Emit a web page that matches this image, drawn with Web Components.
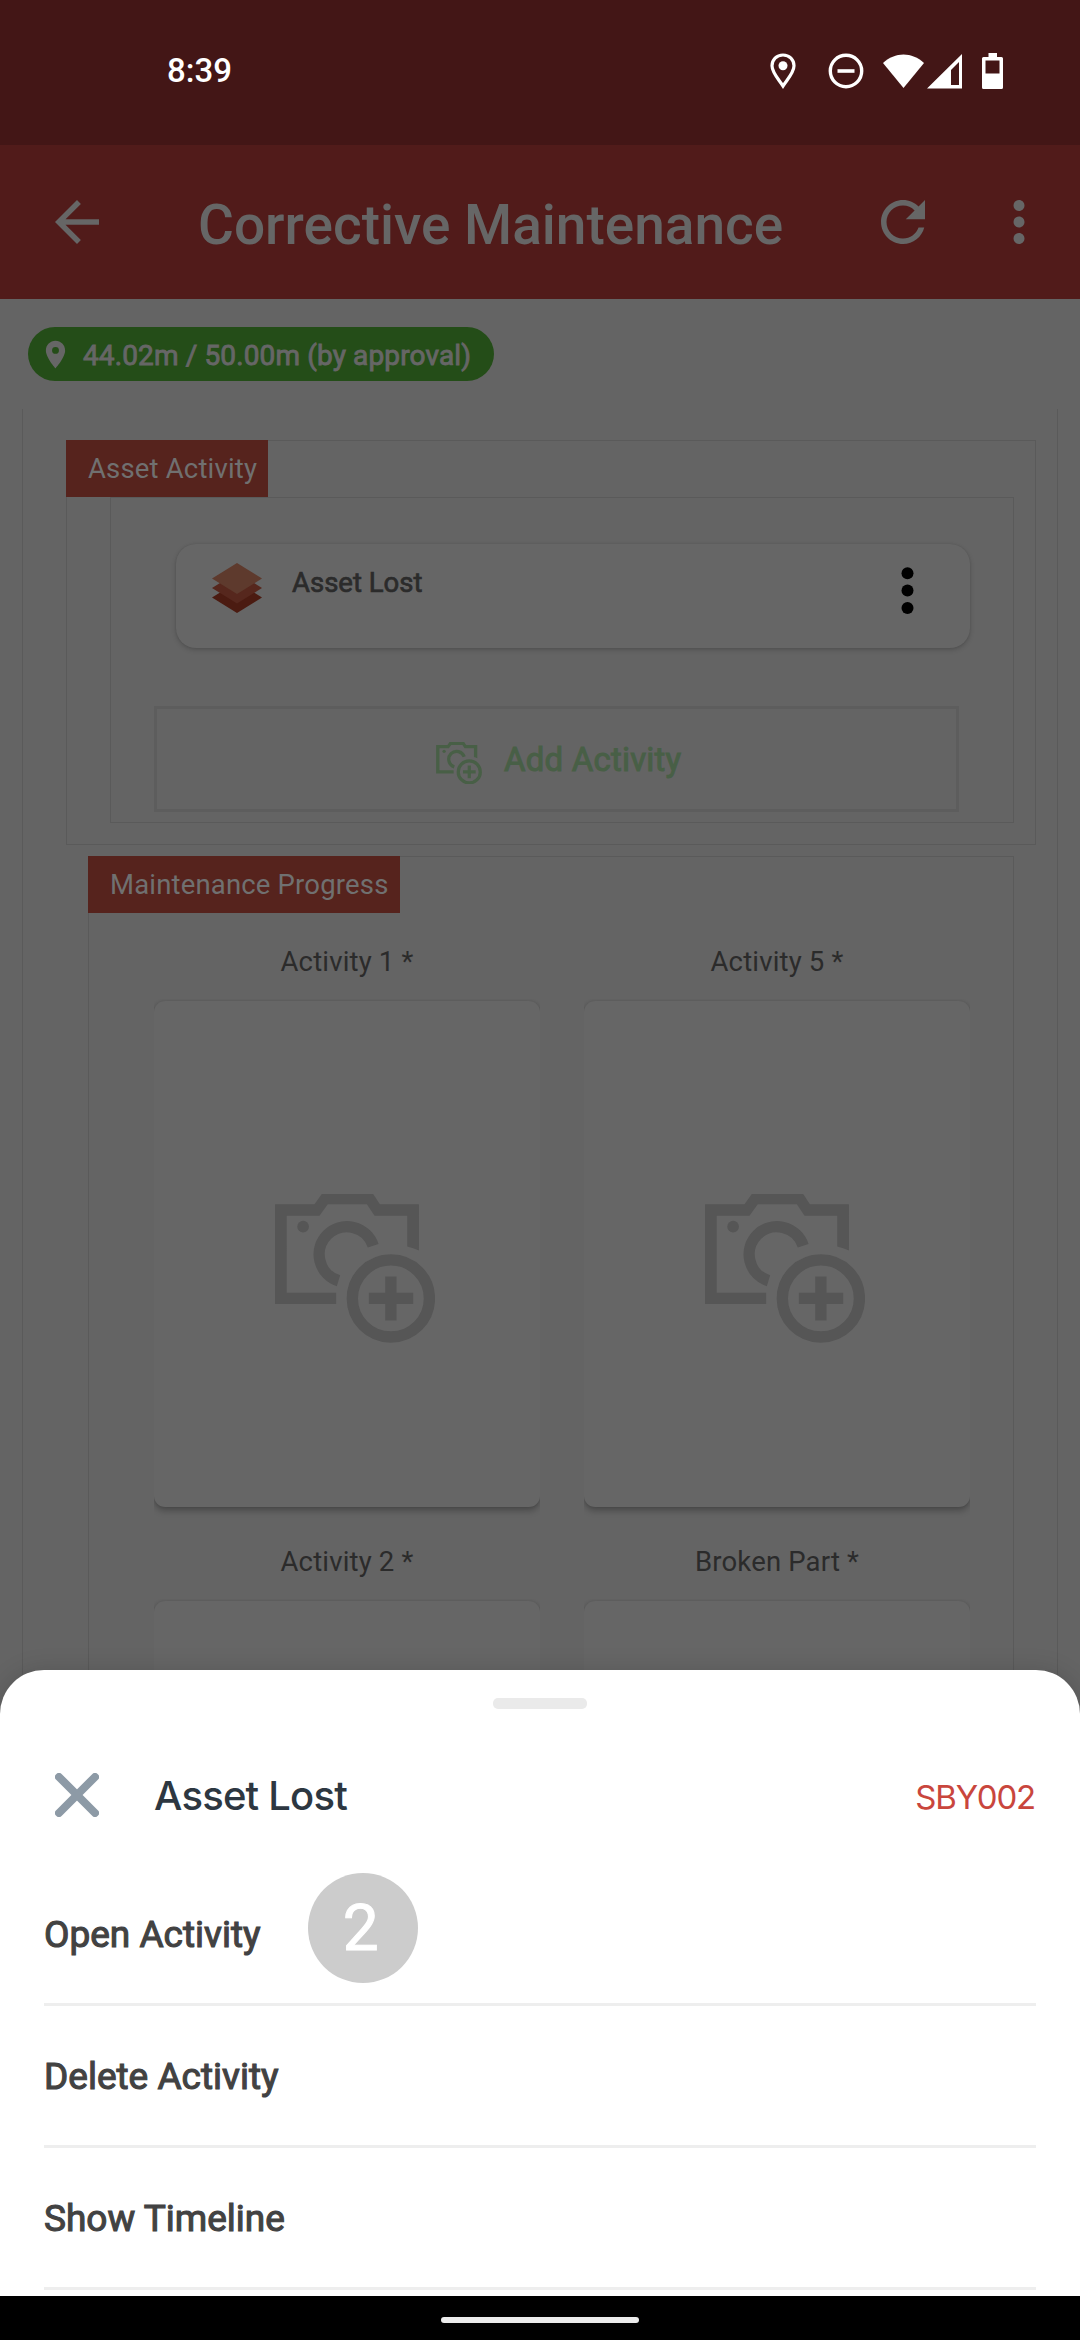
<!DOCTYPE html>
<html lang="en">
<head>
<meta charset="utf-8">
<title>Corrective Maintenance</title>
<style>
  html, body { margin: 0; padding: 0; }
  body { width: 1080px; height: 2340px; overflow: hidden; background: #646464; font-family: Roboto, "Liberation Sans", sans-serif; }
</style>
</head>
<body>
<maintenance-app></maintenance-app>
<script>
const define = (name, html) => {
  const tpl = document.createElement('template');
  tpl.innerHTML = html;
  customElements.define(name, class extends HTMLElement {
    constructor() {
      super();
      this.attachShadow({ mode: 'open' }).appendChild(tpl.content.cloneNode(true));
    }
  });
};

define('camera-icon', `
<style>:host{display:block} svg{display:block;width:100%;height:100%}</style>
<svg viewBox="106 101 479 445" fill="none" stroke="currentColor" stroke-width="34">
  <path fill="currentColor" stroke="none" d="M106 132H224L246 101H400L420 132H537V270Q520 262 502 258V166H404L381 132H264L239 166H141V397H289V431H106Z"/>
  <circle cx="190" cy="199" r="17.500" fill="currentColor" stroke="none"/>
  <path d="M400 256A83 83 0 1 0 296 361"/>
  <circle cx="453" cy="414" r="115.500"/>
  <path d="M387 414H520M453 348V480"/>
</svg>`);

define('status-bar', `
<style>
:host{display:flex;align-items:center;box-sizing:border-box;height:145px;padding:0 77px 4px 167px;background:#431616;color:#fff}
.time{font-weight:500;font-size:33px;line-height:40px;flex:1}
svg{display:block;flex:none}
.pin{margin-right:32px}.dnd{margin-right:19px}.wifi{margin-right:3px}.sig{margin-right:20px}
</style>
<span class="time">8:39</span>
<svg class="pin" width="26" height="36" viewBox="0 0 26 36"><path d="M13 2C6.500 2 2 6.800 2 12.800C2 19.500 8 25.500 13 33C18 25.500 24 19.500 24 12.800C24 6.800 19.500 2 13 2Z" fill="none" stroke="#fff" stroke-width="3.200"/><circle cx="13" cy="12.700" r="4.500" fill="#fff"/></svg>
<svg class="dnd" width="36" height="36" viewBox="0 0 36 36"><circle cx="18" cy="18" r="15.700" fill="none" stroke="#fff" stroke-width="3.400"/><path d="M9.500 18h17" stroke="#fff" stroke-width="3.600"/></svg>
<svg class="wifi" width="41" height="36" viewBox="0 0 41 36"><path d="M0 10C12-1.500 29-1.500 41 10L20.500 35Z" fill="#fff"/></svg>
<svg class="sig" width="35" height="36" viewBox="0 0 35 36"><path d="M35 1V35.500H0ZM32 9L24 17V32H32Z" fill="#fff" fill-rule="evenodd"/></svg>
<svg width="21" height="36" viewBox="0 0 21 36"><path d="M6.500 0H15V4H19.500Q21 4 21 5.500V34.500Q21 36 19.500 36H1.500Q0 36 0 34.500V5.500Q0 4 1.500 4H6.500ZM3.500 7.500V20.500H17.500V7.500Z" fill="#fff" fill-rule="evenodd"/></svg>
`);

define('tool-bar', `
<style>
:host{display:flex;align-items:center;box-sizing:border-box;height:154px;padding:0 28px 0 44px;background:#511b1a;color:#666}
svg{display:block;width:66px;height:66px;fill:currentColor;flex:none}
.title{flex:1;margin-left:88px;padding-top:6px;font-weight:500;font-size:55px;line-height:66px;white-space:nowrap}
.more{margin-left:50px}
</style>
<svg viewBox="0 0 24 24"><path d="M20 11H7.830l5.590-5.590L12 4l-8 8 8 8 1.410-1.410L7.830 13H20v-2z"/></svg>
<span class="title"><slot></slot></span>
<svg viewBox="0 0 24 24"><path d="M17.650 6.350C16.200 4.900 14.210 4 12 4c-4.420 0-7.990 3.580-7.990 8s3.570 8 7.990 8c3.730 0 6.840-2.550 7.730-6h-2.080c-.82 2.330-3.040 4-5.650 4-3.310 0-6-2.690-6-6s2.690-6 6-6c1.660 0 3.140.69 4.220 1.780L13 11h7V4l-2.350 2.350z"/></svg>
<svg class="more" viewBox="0 0 24 24"><path d="M12 8c1.100 0 2-.9 2-2s-.9-2-2-2-2 .9-2 2 .9 2 2 2zm0 2c-1.100 0-2 .9-2 2s.9 2 2 2 2-.9 2-2-.9-2-2-2zm0 6c-1.100 0-2 .9-2 2s.9 2 2 2 2-.9 2-2-.9-2-2-2z"/></svg>
`);

define('distance-chip', `
<style>
:host{display:flex;align-items:center;box-sizing:border-box;width:466px;height:54px;margin:28px 0 28px 28px;padding-left:11px;border-radius:27px;background:#244d18;color:#666;font-size:28px;letter-spacing:.13px;line-height:34px;white-space:nowrap}
svg{width:33px;height:33px;fill:currentColor;margin-right:11px}
span{padding-top:3px;-webkit-text-stroke:.9px currentColor}
</style>
<svg viewBox="0 0 24 24"><path d="M12 2C8.130 2 5 5.130 5 9c0 5.250 7 13 7 13s7-7.750 7-13c0-3.870-3.130-7-7-7zm0 9.500a2.500 2.500 0 0 1 0-5 2.500 2.500 0 0 1 0 5z"/></svg>
<span><slot></slot></span>`);

define('section-label', `
<style>:host{display:block;box-sizing:border-box;width:max-content;height:57px;padding:0 11px 0 22px;background:#56231d;color:#707070;font-size:27.500px;letter-spacing:.17px;line-height:57px;white-space:nowrap}</style><slot></slot>`);

define('activity-card', `
<style>
:host{display:flex;box-sizing:border-box;width:794px;height:104px;padding:19px 56px 0 36px;border-radius:20px;background:#666;box-shadow:0 2px 5px rgba(0,0,0,.18),0 0 2px rgba(0,0,0,.1);color:#2b2b2b;font-size:27.500px}
.name{flex:1;margin-left:30px;line-height:34px;padding-top:3px;-webkit-text-stroke:.7px currentColor}
svg{display:block;flex:none}
.dots{margin-top:4px}
</style>
<svg width="50" height="50" viewBox="0 0 50 50"><path d="M25 19L50 34.500L25 50L0 34.500Z" fill="#4b1b11"/><path d="M25 9.500L50 25L25 40.500L0 25Z" fill="#56271d"/><path d="M25 0L50 15.500L25 31L0 15.500Z" fill="#5e3a2d"/></svg>
<span class="name"><slot></slot></span>
<svg class="dots" width="13" height="48" viewBox="0 0 13 48"><circle cx="6.500" cy="6.300" r="6"/><circle cx="6.500" cy="23.600" r="6"/><circle cx="6.500" cy="40.900" r="6"/></svg>
`);

define('add-button', `
<style>
:host{display:flex;align-items:center;box-sizing:border-box;width:805px;height:106px;padding-left:279px;border:3px solid #5d5d5d;color:#485f46;font-size:33px;letter-spacing:.2px;line-height:40px;white-space:nowrap}
camera-icon{width:46px;height:42.500px;margin:8px 22px 0 0}
span{padding-top:2px;-webkit-text-stroke:1px currentColor}
</style>
<camera-icon></camera-icon><span><slot></slot></span>`);

define('photo-tile', `
<style>
:host{display:flex;flex-direction:column;width:386px;color:#2b2b2b}
.label{font-size:27.500px;letter-spacing:.17px;line-height:34px;height:54px;text-align:center;white-space:nowrap}
.clip{height:523px;overflow:hidden;padding-top:2px}
.card{box-sizing:border-box;height:506px;border-radius:11px;background:#666;color:#565656;padding:193px 0 0 121px;box-shadow:0 4px 6px rgba(0,0,0,.25),0 0 3px rgba(0,0,0,.12)}
camera-icon{width:160px;height:148.500px}
</style>
<div class="label"><slot></slot></div><div class="clip"><div class="card"><camera-icon></camera-icon></div></div>`);

define('form-body', `
<style>
:host{display:block;box-sizing:border-box;width:1036px;height:1400px;margin-left:22px;border:solid #5a5a5a;border-width:0 1px;padding:31px 21px 0 43px;overflow:hidden}
.outer{box-sizing:border-box;width:970px;height:405px;border:1px solid #5a5a5a}
.outer section-label,.progress section-label{margin:-1px 0 0 -1px}
.inner{box-sizing:border-box;width:904px;height:326px;margin-left:43px;border:1px solid #5a5a5a;padding:46px 0 0 43px}
activity-card{margin-left:22px}
add-button{margin-top:58px}
.progress{box-sizing:border-box;width:926px;height:1000px;margin:11px 0 0 22px;border:1px solid #5a5a5a}
.grid{display:grid;grid-template-columns:386px 386px;column-gap:44px;row-gap:21px;padding:32px 0 0 65px}
</style>
<div class="outer">
  <section-label>Asset Activity</section-label>
  <div class="inner">
    <activity-card>Asset Lost</activity-card>
    <add-button>Add Activity</add-button>
  </div>
</div>
<div class="progress">
  <section-label>Maintenance Progress</section-label>
  <div class="grid">
    <photo-tile>Activity 1 *</photo-tile>
    <photo-tile>Activity 5 *</photo-tile>
    <photo-tile>Activity 2 *</photo-tile>
    <photo-tile>Broken Part *</photo-tile>
  </div>
</div>`);

define('sheet-option', `
<style>
:host{display:flex;box-sizing:border-box;height:142px;border-bottom:3px solid #eee;color:#424242;font-size:37px;line-height:44px;padding-top:49px;white-space:nowrap}
.t{-webkit-text-stroke:1.100px currentColor}
</style><span class="t"><slot></slot></span><slot name="badge"></slot>`);

define('step-badge', `
<style>:host{display:block;box-sizing:border-box;flex:none;width:110px;height:110px;padding-right:4px;border-radius:50%;background:#ccc;color:#fff;font-weight:400;font-size:64px;line-height:112px;text-align:center;-webkit-text-stroke:1px #fff}</style><slot></slot>`);

define('action-sheet', `
<style>
:host{display:flex;flex-direction:column;box-sizing:border-box;height:626px;border-radius:44px 44px 0 0;background:#fff;padding:28px 44px 0;box-shadow:0 0 24px rgba(0,0,0,.14);overflow:hidden}
.handle{width:94px;height:11px;border-radius:5px;background:#eaeaea;align-self:center;flex:none}
.head{display:flex;align-items:center;height:44px;margin-top:64px;padding-left:11px;font-family:Inter,"Liberation Sans",sans-serif;white-space:nowrap;flex:none}
.head svg{width:44px;height:44px}
.name{flex:1;margin-left:55px;padding-top:1px;font-size:40px;letter-spacing:-.8px;line-height:48px;font-weight:500;color:#2d3741}
.code{font-size:33px;letter-spacing:-1.200px;line-height:40px;color:#c9463d;padding:4px 1px 0 0}
.list{margin-top:47px;flex:none}
step-badge{margin:-40px 0 0 47px}
</style>
<div class="handle"></div>
<div class="head">
  <svg viewBox="0 0 44 44"><path d="M4 4L40 40M40 4L4 40" stroke="#8d9aa6" stroke-width="8" stroke-linecap="round"/></svg>
  <span class="name"><slot></slot></span><span class="code"><slot name="code"></slot></span>
</div>
<div class="list">
  <sheet-option>Open Activity<step-badge slot="badge">2</step-badge></sheet-option>
  <sheet-option>Delete Activity</sheet-option>
  <sheet-option>Show Timeline</sheet-option>
</div>`);

define('nav-bar', `
<style>:host{display:flex;justify-content:center;align-items:center;box-sizing:border-box;height:44px;padding-top:4px;background:#000}i{width:198px;height:6px;border-radius:3px;background:#ececec}</style><i></i>`);

define('maintenance-app', `
<style>
:host{display:block;position:relative;width:1080px;height:2340px;overflow:hidden;background:#646464}
.overlay{position:absolute;left:0;right:0;bottom:0}
</style>
<status-bar></status-bar>
<tool-bar>Corrective Maintenance</tool-bar>
<distance-chip>44.02m / 50.00m (by approval)</distance-chip>
<form-body></form-body>
<div class="overlay">
  <action-sheet>Asset Lost<span slot="code">SBY002</span></action-sheet>
  <nav-bar></nav-bar>
</div>`);
</script>
</body>
</html>
